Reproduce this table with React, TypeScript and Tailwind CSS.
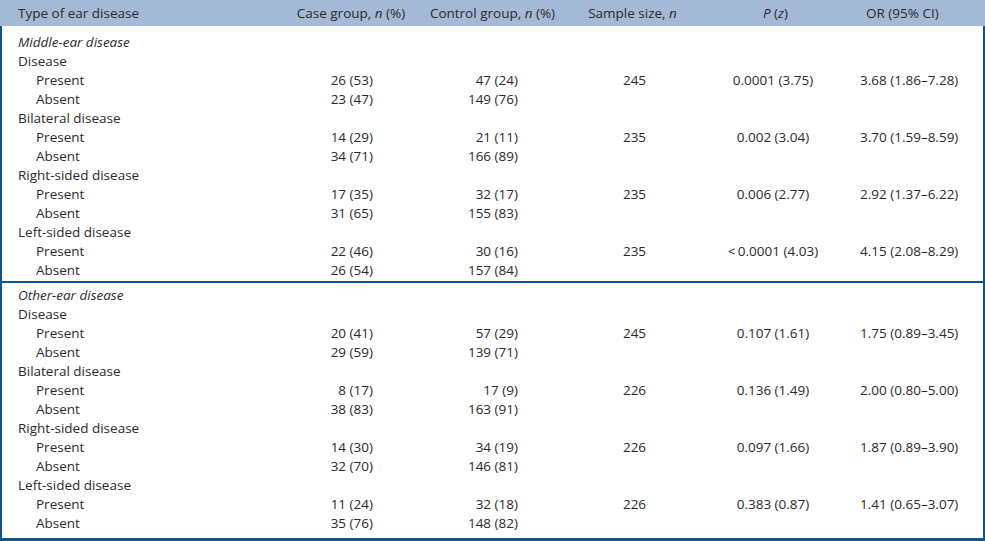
type Row = {
  label: string;
  sub?: boolean;
  title?: boolean;
  caseN?: string;
  ctrl?: string;
  size?: string;
  p?: string;
  or?: string;
};

const group = (
  name: string,
  present: [string, string, string, string, string],
  absent: [string, string]
): Row[] => [
  { label: name },
  {
    label: "Present",
    sub: true,
    caseN: present[0],
    ctrl: present[1],
    size: present[2],
    p: present[3],
    or: present[4],
  },
  { label: "Absent", sub: true, caseN: absent[0], ctrl: absent[1] },
];

const middleEar: Row[] = [
  { label: "Middle-ear disease", title: true },
  ...group("Disease", ["26 (53)", "47 (24)", "245", "0.0001 (3.75)", "3.68 (1.86–7.28)"], ["23 (47)", "149 (76)"]),
  ...group("Bilateral disease", ["14 (29)", "21 (11)", "235", "0.002 (3.04)", "3.70 (1.59–8.59)"], ["34 (71)", "166 (89)"]),
  ...group("Right-sided disease", ["17 (35)", "32 (17)", "235", "0.006 (2.77)", "2.92 (1.37–6.22)"], ["31 (65)", "155 (83)"]),
  ...group("Left-sided disease", ["22 (46)", "30 (16)", "235", "<\u20090.0001 (4.03)", "4.15 (2.08–8.29)"], ["26 (54)", "157 (84)"]),
];

const otherEar: Row[] = [
  { label: "Other-ear disease", title: true },
  ...group("Disease", ["20 (41)", "57 (29)", "245", "0.107 (1.61)", "1.75 (0.89–3.45)"], ["29 (59)", "139 (71)"]),
  ...group("Bilateral disease", ["8 (17)", "17 (9)", "226", "0.136 (1.49)", "2.00 (0.80–5.00)"], ["38 (83)", "163 (91)"]),
  ...group("Right-sided disease", ["14 (30)", "34 (19)", "226", "0.097 (1.66)", "1.87 (0.89–3.90)"], ["32 (70)", "146 (81)"]),
  ...group("Left-sided disease", ["11 (24)", "32 (18)", "226", "0.383 (0.87)", "1.41 (0.65–3.07)"], ["35 (76)", "148 (82)"]),
];

const cols = "grid grid-cols-[280px_140px_145px_135px_145px_1fr]";

function TableRow({ row }: { row: Row }) {
  return (
    <div className={`${cols} h-[19px] leading-[19px] whitespace-nowrap`}>
      <div className={row.sub ? "pl-[34px]" : "pl-[16px]"}>
        {row.title ? <i>{row.label}</i> : row.label}
      </div>
      <div className="text-right pr-[49px]">{row.caseN}</div>
      <div className="text-right pr-[49px]">{row.ctrl}</div>
      <div className="text-center">{row.size}</div>
      <div className="text-center pr-[3px]">{row.p}</div>
      <div className="pl-[13px]">{row.or}</div>
    </div>
  );
}

export default function App() {
  return (
    <div
      className="w-[985px] h-[541px] bg-white text-[#2a2a2a] text-[13.5px] flex flex-col"
      style={{ fontFamily: '"Open Sans", "Liberation Sans", sans-serif' }}
    >
      {/* header */}
      <div className={`${cols} h-[26px] items-center bg-[#a3b9d6] whitespace-nowrap`}>
        <div className="pl-[18px]">Type of ear disease</div>
        <div className="text-center pl-[2px]">
          Case group, <i>n</i> (%)
        </div>
        <div className="text-center">
          Control group, <i>n</i> (%)
        </div>
        <div className="text-center">
          Sample size, <i>n</i>
        </div>
        <div className="text-center pl-[6px]">
          <i>P</i> (<i>z</i>)
        </div>
        <div className="pl-[21px]">OR (95% CI)</div>
      </div>

      <div className="flex-1 flex flex-col border-x-2 border-b-[3px] border-[#0e5494]">
        <div className="pt-[7px] pb-[1px] border-b-2 border-[#0e5494]">
          {middleEar.map((r, i) => (
            <TableRow key={i} row={r} />
          ))}
        </div>
        <div className="pt-[3px]">
          {otherEar.map((r, i) => (
            <TableRow key={i} row={r} />
          ))}
        </div>
      </div>
    </div>
  );
}
